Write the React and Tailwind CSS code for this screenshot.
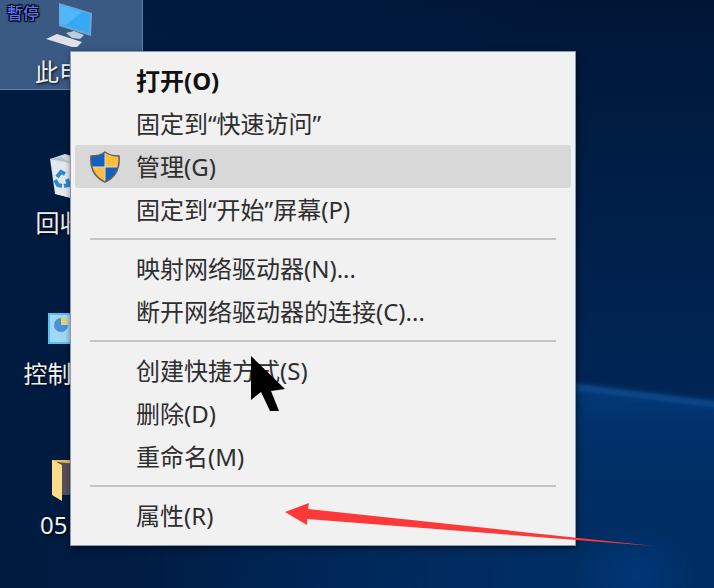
import { useState } from "react";

const menuGroups = [
  [
    { id: "open", label: "打开(O)", bold: true },
    { id: "pin-quick", label: "固定到“快速访问”" },
    { id: "manage", label: "管理(G)", shield: true },
    { id: "pin-start", label: "固定到“开始”屏幕(P)" },
  ],
  [
    { id: "map", label: "映射网络驱动器(N)..." },
    { id: "unmap", label: "断开网络驱动器的连接(C)..." },
  ],
  [
    { id: "shortcut", label: "创建快捷方式(S)" },
    { id: "delete", label: "删除(D)" },
    { id: "rename", label: "重命名(M)" },
  ],
  [{ id: "props", label: "属性(R)" }],
];

function ComputerIcon() {
  return (
    <svg width="50" height="48" viewBox="0 0 50 48">
      <path d="M13 3 L46 13 L45 36 L13 26 Z" fill="#6aa7d3" />
      <path d="M14 5 L44 14 L43 33 L14 24 Z" fill="#35a8f6" />
      <path d="M14 5 L36 12 L20 25 L14 24 Z" fill="#4fb6fa" />
      <path d="M20 33 L28 31 L38 35 L34 39 L26 38 Z" fill="#b9cddd" />
      <path d="M0 39 L11 34 L36 42 L31 47 L26 47 Z" fill="#dfe1e7" />
    </svg>
  );
}

function RecycleIcon() {
  return (
    <svg width="50" height="48" viewBox="0 0 50 48">
      <path d="M3 8 L12 5 L18 3 L28 6 L46 8 L42 44 L24 47 L8 43 Z" fill="#d3dce6" />
      <path d="M4 9 L24 12 L24 47 L9 43 Z" fill="#e4e9ef" />
      <path d="M3 8 L14 6 L24 12 Z" fill="#b3c1cf" />
      <g fill="none" stroke="#2b8ad2" strokeWidth="4">
        <path d="M10 26 L14 21 L18 23" />
        <path d="M8 29 L11 34 L15 35" />
        <path d="M17 35 L22 34 L20 28" />
      </g>
    </svg>
  );
}

function ControlPanelIcon() {
  return (
    <svg width="50" height="48" viewBox="0 0 50 48">
      <rect x="1" y="11" width="48" height="31" fill="#5cc0ee" />
      <rect x="3" y="13" width="44" height="27" fill="#a0d8f5" />
      <path d="M14 16 A7 7 0 1 0 21 23 L14 23 Z" fill="#4a92d4" />
      <path d="M14 15 A8 8 0 0 1 22 22 L14 22 Z" fill="#ecd06f" />
    </svg>
  );
}

function FolderIcon() {
  return (
    <svg width="50" height="48" viewBox="0 0 50 48">
      <path d="M5 7 L44 7 L44 42 L12 42 Z" fill="#e5bd5b" />
      <path d="M10 9 L40 12 L40 42 L14 42 Z" fill="#57505a" />
      <path d="M5 7 L15 12 L15 48 L5 42 Z" fill="#fbdc8c" />
    </svg>
  );
}

function Shield() {
  return (
    <svg width="30" height="32" viewBox="0 0 30 32">
      <defs>
        <clipPath id="shield">
          <path d="M15 1 C11 4 6 5 1 5 C0 17 4 26 15 31 C26 26 30 17 29 5 C24 5 19 4 15 1 Z" />
        </clipPath>
      </defs>
      <g clipPath="url(#shield)">
        <rect width="15" height="16" fill="#1461bd" />
        <rect x="15" width="15" height="16" fill="#ffbd3c" />
        <rect y="16" width="15" height="16" fill="#ffbd3c" />
        <rect x="15" y="16" width="15" height="16" fill="#1461bd" />
        <path d="M15 0 V32 M0 16 H30" stroke="#d5d8d0" strokeWidth="1" />
      </g>
      <path
        d="M15 1 C11 4 6 5 1 5 C0 17 4 26 15 31 C26 26 30 17 29 5 C24 5 19 4 15 1 Z"
        fill="none"
        stroke="#5d625f"
        strokeWidth="1.5"
      />
    </svg>
  );
}

const shortcuts = [
  { id: "pc", label: "此电脑", Icon: ComputerIcon, selected: true },
  { id: "bin", label: "回收站", Icon: RecycleIcon },
  { id: "control", label: "控制面板", Icon: ControlPanelIcon },
  { id: "folder", label: "05", Icon: FolderIcon, left: true },
];

function Wallpaper() {
  return (
    <svg
      className="absolute inset-0 h-full w-full"
      viewBox="0 0 714 588"
      preserveAspectRatio="none"
      aria-hidden="true"
    >
      <defs>
        <linearGradient id="sky" x1="0" y1="0" x2="0" y2="1">
          <stop offset="0" stopColor="#001637" />
          <stop offset="0.25" stopColor="#001d43" />
          <stop offset="0.65" stopColor="#002555" />
          <stop offset="1" stopColor="#002a60" />
        </linearGradient>
        <linearGradient id="side" x1="0" y1="0" x2="1" y2="0">
          <stop offset="0" stopColor="#001b40" />
          <stop offset="0.2" stopColor="#001b40" stopOpacity="0.9" />
          <stop offset="0.8" stopColor="#001b40" stopOpacity="0" />
        </linearGradient>
        <linearGradient id="beam" x1="0" y1="0" x2="0" y2="1">
          <stop offset="0" stopColor="#033a78" />
          <stop offset="0.2" stopColor="#00316c" />
          <stop offset="0.5" stopColor="#002e62" />
          <stop offset="1" stopColor="#002e64" />
        </linearGradient>
        <linearGradient id="fade" x1="0" y1="0" x2="1" y2="0">
          <stop offset="0.2" stopColor="#000" />
          <stop offset="0.8" stopColor="#fff" />
        </linearGradient>
        <mask id="beamMask">
          <rect width="714" height="588" fill="url(#fade)" />
        </mask>
        <radialGradient id="glow">
          <stop offset="0" stopColor="#003a80" stopOpacity="0.7" />
          <stop offset="1" stopColor="#003a80" stopOpacity="0" />
        </radialGradient>
        <filter id="soft" x="-10%" y="-50%" width="120%" height="200%">
          <feGaussianBlur stdDeviation="2" />
        </filter>
      </defs>
      <rect width="714" height="588" fill="url(#sky)" />
      <rect width="714" height="588" fill="url(#side)" />
      <g mask="url(#beamMask)">
        <path d="M100 326 L730 407 L730 600 L100 600 Z" fill="url(#beam)" />
      </g>
      <path d="M560 383 L730 407 L730 600 L560 600 Z" fill="url(#beam)" mask="url(#beamMask)" />
      <path d="M560 385 L730 406" stroke="#0a4688" strokeWidth="7" filter="url(#soft)" />
      <ellipse cx="635" cy="575" rx="60" ry="50" fill="url(#glow)" />
    </svg>
  );
}

function Desktop() {
  return (
    <nav className="relative flex w-[143px] flex-col gap-[61px]">
      {shortcuts.map(({ id, label, Icon, selected, left }) => (
        <button
          key={id}
          type="button"
          className={`flex h-[90px] flex-col items-center text-2xl text-[#f0f0f4] [text-shadow:1px_1px_3px_#000] ${
            selected ? "border-r border-b border-[#6080a6] bg-[#3a5a84]" : ""
          }`}
        >
          <Icon />
          <span className={`mt-2 leading-8 ${left ? "self-start pl-10" : ""}`}>{label}</span>
        </button>
      ))}
    </nav>
  );
}

function ContextMenu({ active, onHover }) {
  return (
    <div
      role="menu"
      className="absolute top-[51px] right-[138px] left-[70px] border border-[#8b9ab0] bg-[#f1f1f2] px-1 pt-[7px] pb-2 shadow-[1px_2px_6px_rgba(0,0,0,0.6)]"
    >
      {menuGroups.map((group, i) => (
        <div key={i}>
          {i > 0 && (
            <div role="separator" className="mx-[15px] flex h-4 items-center">
              <div className="h-[2px] w-full bg-[#c4c4c4]" />
            </div>
          )}
          {group.map((item) => (
            <button
              key={item.id}
              type="button"
              role="menuitem"
              onMouseEnter={() => onHover(item.id)}
              className={`flex h-[43px] w-full items-center rounded-xs text-left text-2xl ${
                active === item.id ? "bg-[#d8d8d9]" : ""
              } ${item.bold ? "font-bold text-[#111]" : "text-[#2e2e2e]"}`}
            >
              <span className="flex w-[61px] shrink-0 pl-[15px]">{item.shield && <Shield />}</span>
              {item.label}
            </button>
          ))}
        </div>
      ))}
    </div>
  );
}

export default function App() {
  const [active, setActive] = useState("manage");

  return (
    <main className="relative min-h-screen overflow-hidden bg-[#001b40] font-['Noto_Sans','Noto_Sans_CJK_SC',sans-serif]">
      <Wallpaper />
      <Desktop />
      <ContextMenu active={active} onHover={setActive} />

      {/* player state */}
      <span className="absolute top-1 left-[7px] text-base leading-[18px] font-medium text-[#5876f5] [text-shadow:1px_1px_1px_#000,-1px_-1px_1px_#000,1px_-1px_1px_#000,-1px_1px_1px_#000,0_0_2px_#000]">
        暫停
      </span>

      {/* mouse pointer */}
      <svg className="absolute top-[355px] left-[250px]" width="36" height="58" viewBox="0 0 36 58">
        <path d="M1 1 L35 34 L21 36 L29 56 L20 56 L11 37 L1 45 Z" fill="#000" />
      </svg>

      {/* red arrow */}
      <svg className="absolute top-[500px] left-[284px]" width="372" height="48" viewBox="0 0 372 48">
        <path d="M1 12 L25 3 L24 9 L370 46 L23 19 L23 25 Z" fill="#fc3938" />
      </svg>
    </main>
  );
}
